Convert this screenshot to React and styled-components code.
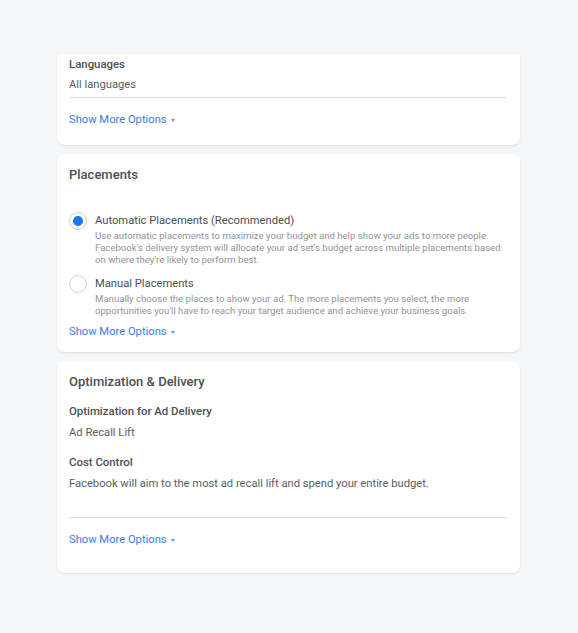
import React from 'react';
import styled, { createGlobalStyle } from 'styled-components';

const GlobalStyle = createGlobalStyle`
  html, body {
    margin: 0;
    padding: 0;
    background: #f5f6f7;
  }
  body {
    font-family: Roboto, "Liberation Sans", Arial, sans-serif;
    color: #4b4f56;
    -webkit-font-smoothing: antialiased;
  }
`;

const Page = styled.div`
  min-height: 100vh;
  padding: 54px 0 40px 57px;
  box-sizing: border-box;
  display: flex;
  flex-direction: column;
  gap: 9px;
`;

const Card = styled.section`
  width: 463px;
  box-sizing: border-box;
  background: #fff;
  border-radius: ${p => (p.$cut ? '0 0 8px 8px' : '8px')};
  box-shadow: 0 1px 2px rgba(0, 0, 0, 0.1);
  padding: ${p => p.$pad || '12px 13px 12px 12px'};
`;

const CardTitle = styled.h2`
  margin: 0;
  font-size: 13px;
  line-height: 17px;
  font-weight: 500;
  color: #4b4f56;
`;

const Label = styled.div`
  font-size: 11.4px;
  line-height: 14px;
  font-weight: 500;
  color: #4b4f56;
  margin-top: ${p => p.$top || 0}px;
`;

const Value = styled.div`
  font-size: 11.2px;
  line-height: 16px;
  color: #5a5e66;
  margin-top: ${p => p.$top || 0}px;
`;

const Divider = styled.hr`
  border: 0;
  border-top: 1px solid #dadde1;
  margin: ${p => p.$top || 0}px 0 0;
`;

const MoreLink = styled.a`
  display: inline-flex;
  align-items: center;
  gap: 4px;
  font-size: 11.2px;
  line-height: 16px;
  color: #3b7be3;
  text-decoration: none;
  cursor: pointer;
  margin-top: ${p => p.$top || 0}px;
`;

const Caret = styled.span`
  width: 0;
  height: 0;
  border-left: 2.5px solid transparent;
  border-right: 2.5px solid transparent;
  border-top: 3px solid #6d8fd0;
  margin-top: 1px;
`;

const RadioList = styled.div`
  display: flex;
  flex-direction: column;
  gap: 9px;
  margin-top: 29px;
`;

const RadioRow = styled.label`
  display: grid;
  grid-template-columns: 20px 1fr;
  column-gap: 6px;
  cursor: pointer;
`;

const RadioCircle = styled.span`
  width: 18px;
  height: 18px;
  box-sizing: border-box;
  border-radius: 50%;
  border: 1px solid #ccd0d5;
  background: #fff;
  display: flex;
  align-items: center;
  justify-content: center;
  &::after {
    content: '';
    width: 10px;
    height: 10px;
    border-radius: 50%;
    background: ${p => (p.$checked ? '#1877f2' : 'transparent')};
  }
`;

const RadioText = styled.div`
  display: flex;
  flex-direction: column;
`;

const RadioTitle = styled.span`
  font-size: 11.2px;
  line-height: 18px;
  color: #4b4f56;
`;

const RadioDesc = styled.span`
  font-size: 9.6px;
  line-height: 12px;
  color: #90949c;
`;

const ShowMore = ({ top }) => (
  <MoreLink $top={top}>
    Show More Options <Caret />
  </MoreLink>
);

const Radio = ({ checked, title, children }) => (
  <RadioRow>
    <RadioCircle $checked={checked} />
    <RadioText>
      <RadioTitle>{title}</RadioTitle>
      <RadioDesc>{children}</RadioDesc>
    </RadioText>
  </RadioRow>
);

export default function App() {
  return (
    <>
      <GlobalStyle />
      <Page>
        <Card $cut $pad="3px 13px 17px 12px">
          <Label>Languages</Label>
          <Value $top={6}>All languages</Value>
          <Divider $top={4} />
          <div>
            <ShowMore top={14} />
          </div>
        </Card>

        <Card $pad="12px 13px 12px 12px">
          <CardTitle>Placements</CardTitle>
          <RadioList>
            <Radio checked title="Automatic Placements (Recommended)">
              Use automatic placements to maximize your budget and help show your ads to more people.
              Facebook's delivery system will allocate your ad set's budget across multiple placements based
              on where they're likely to perform best.
            </Radio>
            <Radio title="Manual Placements">
              Manually choose the places to show your ad. The more placements you select, the more
              opportunities you'll have to reach your target audience and achieve your business goals.
            </Radio>
          </RadioList>
          <ShowMore top={7} />
        </Card>

        <Card $pad="12px 13px 25px 12px">
          <CardTitle>Optimization &amp; Delivery</CardTitle>
          <Label $top={14}>Optimization for Ad Delivery</Label>
          <Value $top={7}>Ad Recall Lift</Value>
          <Label $top={14}>Cost Control</Label>
          <Value $top={7}>Facebook will aim to the most ad recall lift and spend your entire budget.</Value>
          <Divider $top={25} />
          <div>
            <ShowMore top={14} />
          </div>
        </Card>
      </Page>
    </>
  );
}
